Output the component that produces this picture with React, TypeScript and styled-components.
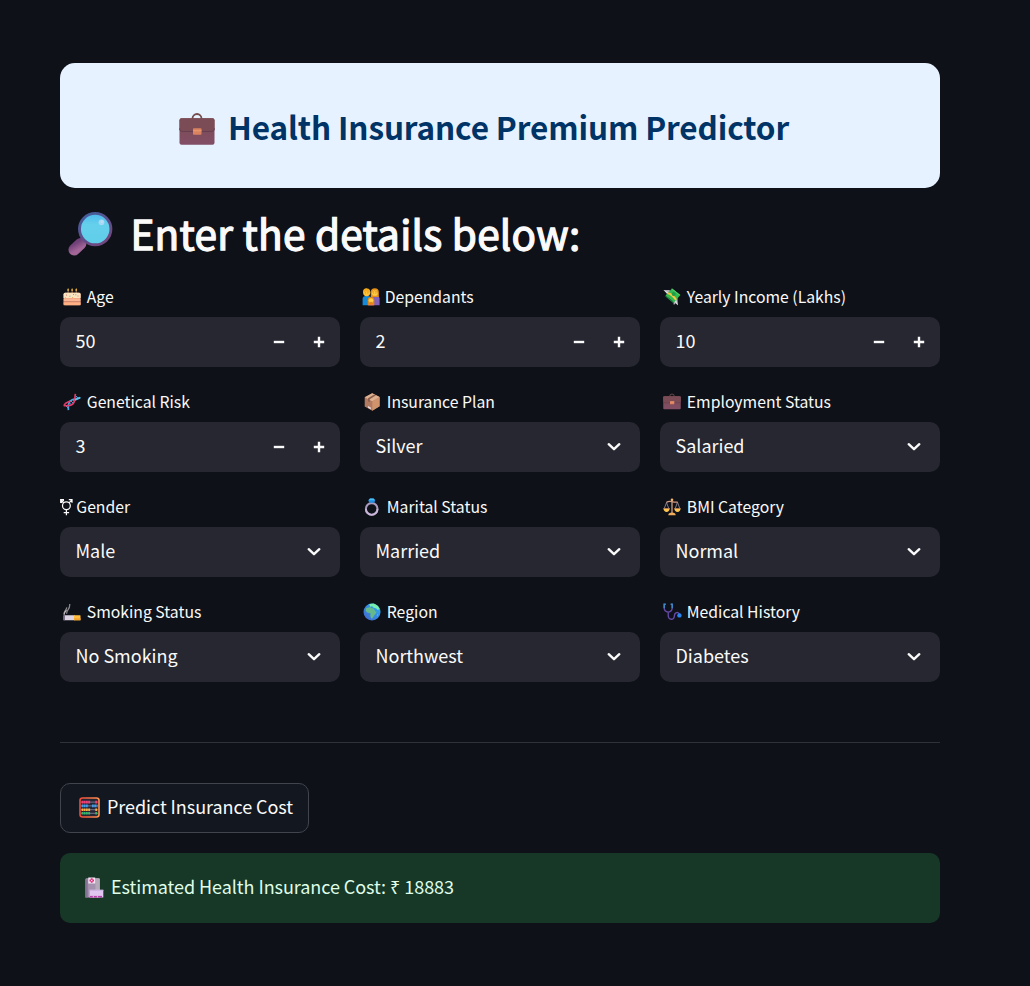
import React from 'react';
import styled, { createGlobalStyle } from 'styled-components';

const GlobalStyle = createGlobalStyle`
  * { box-sizing: border-box; }
  body {
    margin: 0;
    background: #0e1117;
    color: #fafafa;
    font-family: "Noto Sans CJK JP", "Noto Sans", sans-serif;
  }
`;

const Page = styled.main`
  min-height: 986px;
  padding: 63px 90px 63px 60px;
`;

const Banner = styled.header`
  display: flex;
  align-items: flex-start;
  height: 125px;
  padding: 49px 0 0 118.5px;
  border-radius: 15px;
  background: #e6f2ff;
`;

const BannerTitle = styled.h1`
  margin: -7px 0 0 13.5px;
  color: #003366;
  font-size: 31.5px;
  font-weight: 700;
  letter-spacing: -0.11px;
  line-height: 42px;
  white-space: nowrap;
`;

const SectionHeading = styled.h2`
  display: flex;
  align-items: center;
  height: 54px;
  margin: 19px 0 24px;
  padding-left: 7px;
  gap: 17.5px;
  font-size: 40.5px;
  font-weight: 400;
  letter-spacing: 0.26px;
  -webkit-text-stroke: 1.3px currentColor;
  line-height: 54px;
  white-space: nowrap;
`;

const HeadingText = styled.span`
  padding-bottom: 2px;
`;

const FieldGrid = styled.section`
  display: grid;
  grid-template-columns: repeat(3, 280px);
  gap: 23px 20px;
`;

const Field = styled.div`
  display: flex;
  flex-direction: column;
  gap: 8px;
`;

const Label = styled.label<{ $inset: number; $gap: number }>`
  display: flex;
  align-items: center;
  height: 24px;
  padding-left: ${(p) => p.$inset}px;
  gap: ${(p) => p.$gap}px;
  font-size: 15.75px;
  line-height: 24px;
  white-space: nowrap;
`;

const Control = styled.div<{ $end: number }>`
  display: flex;
  align-items: center;
  justify-content: space-between;
  height: 50px;
  padding: 0 ${(p) => p.$end}px 0 15.5px;
  border-radius: 10px;
  background: #262730;
`;

const Value = styled.span<{ $tight?: boolean }>`
  padding-bottom: ${(p) => (p.$tight ? 3 : 4)}px;
  font-size: 18px;
  letter-spacing: ${(p) => (p.$tight ? '-0.055px' : '-0.02px')};
  line-height: 28px;
  white-space: nowrap;
`;

const Stepper = styled.div`
  display: flex;
  gap: 28px;
`;

const StepButton = styled.button`
  display: flex;
  padding: 0;
  border: 0;
  background: none;
  color: #fafafa;
`;

const Divider = styled.hr`
  height: 1px;
  margin: 60px 0 40px;
  border: 0;
  background: #303238;
`;

const PredictButton = styled.button`
  display: flex;
  align-items: center;
  width: 249px;
  height: 50px;
  margin: 0;
  padding: 0 0 2px 17.5px;
  gap: 7.5px;
  border: 1px solid #41444c;
  border-radius: 10px;
  background: #131720;
  color: #fafafa;
  font: inherit;
`;

const Result = styled.div`
  display: flex;
  align-items: center;
  height: 70px;
  margin-top: 20px;
  padding: 0 0 1px 25px;
  gap: 7px;
  border-radius: 10px;
  background: #183827;
  color: #dffde9;
`;

const Svg = styled.svg`
  display: block;
  flex: none;
`;

const Briefcase = ({ width = 18 }: { width?: number }) => (
  <Svg width={width} height={width} viewBox="0 0 36 36">
    <defs>
      <linearGradient id="case" x1="0" y1="0" x2="0" y2="1">
        <stop offset="0" stopColor="#7a4c50" />
        <stop offset="1" stopColor="#824e66" />
      </linearGradient>
    </defs>
    <path d="M13.5 7V6.5a4.5 4.5 0 0 1 9 0V7" fill="none" stroke="#744d4c" strokeWidth="1.8" />
    <rect x="0.5" y="6.3" width="35" height="26.4" rx="2" fill="url(#case)" />
    <path d="M.5 8.3a2 2 0 0 1 2-2h31a2 2 0 0 1 2 2V17a3 3 0 0 1-3 2.5h-29A3 3 0 0 1 .5 17z" fill="#7b4c55" />
    <path d="M.5 16.5a3 3 0 0 0 3 3h29a3 3 0 0 0 3-3" fill="none" stroke="#653e51" strokeWidth="1" />
    <rect x="14" y="16.2" width="8.5" height="6.5" rx=".8" fill="#d98260" />
    <path d="M14 18.8h8.5" stroke="#ef9a70" strokeWidth="1" />
  </Svg>
);

const Magnifier = () => (
  <Svg width="46" height="46" viewBox="0 0 46 46">
    <defs>
      <linearGradient id="rim" x1="0" y1="0" x2=".6" y2="1">
        <stop offset="0" stopColor="#3f5e9d" />
        <stop offset="1" stopColor="#71477f" />
      </linearGradient>
      <linearGradient id="grip" x1="0" y1="0" x2=".6" y2="1">
        <stop offset="0" stopColor="#704078" />
        <stop offset="1" stopColor="#a26597" />
      </linearGradient>
      <linearGradient id="glass" x1="0" y1="0" x2="0" y2="1">
        <stop offset="0" stopColor="#4db9ed" />
        <stop offset=".35" stopColor="#65d0ec" />
        <stop offset="1" stopColor="#60cee8" />
      </linearGradient>
    </defs>
    <path d="M13 28.5 18 33" stroke="#654477" strokeWidth="5" />
    <path d="M7.2 38.8 13.6 32.8" stroke="url(#grip)" strokeWidth="11.5" strokeLinecap="round" />
    <circle cx="28.2" cy="18.1" r="15.7" fill="url(#glass)" stroke="url(#rim)" strokeWidth="2.9" />
    <circle cx="34.5" cy="11.3" r="2.9" fill="#a4d9f3" />
    <circle cx="35" cy="10.6" r="1.6" fill="#b9dcf7" />
  </Svg>
);

const Cake = () => (
  <Svg width="18" height="18" viewBox="0 0 18 18">
    <path d="M5.1 2v4M9.1 2v4M13.2 2v4" stroke="#a87450" strokeWidth="1" />
    <path d="m5.1.1.9 1.8-.9 1.3-.9-1.3zM9.1.1l.9 1.8-.9 1.3-.9-1.3zM13.2.1l.9 1.8-.9 1.3-.9-1.3z" fill="#ffc738" />
    <rect x=".6" y="4.7" width="17" height="12.6" rx="1.5" fill="#f3a98a" />
    <path d="M.6 6.2a1.5 1.5 0 0 1 1.5-1.5h14a1.5 1.5 0 0 1 1.5 1.5v3.9H.6z" fill="#fae5bf" />
    <path d="M.6 11.4h17v1.2H.6z" fill="#ffc19b" />
    <path d="M.6 13.4h17v1H.6z" fill="#c1755c" />
    <path d="M.6 14.4h17v2.8H.6z" fill="#ffb184" />
    <path d="M3 7.1h1M10 6.5h1M14.5 8h1" stroke="#de7c80" />
    <path d="M6.4 8.2h1M12.3 6.8h1" stroke="#7aa8cb" />
    <path d="M2 9.8h1M9 9.5h1" stroke="#eab364" />
  </Svg>
);

const Family = () => (
  <Svg width="18" height="18" viewBox="0 0 18 18">
    <path d="M.6 17.3v-6.2q0-3 3.3-3h2q3.3 0 3.3 3v6.2z" fill="#1689d7" />
    <path d="M9 17.3v-6.2q0-3 3.3-3h2q3.3 0 3.3 3v6.2z" fill="#8061bb" />
    <path d="M8.8 9V4.3a4 4 0 0 1 8 0V9z" fill="#e79217" />
    <circle cx="4.7" cy="4.6" r="3.6" fill="#ffc238" />
    <circle cx="12.8" cy="4.9" r="2.9" fill="#ffcb45" />
    <path d="M1.1 4.2C1.1.5 3.4.2 5.3.4c2 .2 3 1.5 3 4C6.3 4.5 4.9 4 4.1 2.9 3.3 4 2.4 4.4 1.1 4.2z" fill="#f5ab1f" />
    <path d="M9.7 4.1c1.4-.1 2.5-.7 3-1.5.7 1 1.8 1.5 3.4 1.5" stroke="#e18d19" strokeWidth=".8" fill="none" />
    <circle cx="3.6" cy="4.9" r=".4" fill="#80562c" />
    <circle cx="5.9" cy="4.9" r=".4" fill="#80562c" />
    <circle cx="11.8" cy="5" r=".4" fill="#80562c" />
    <circle cx="13.9" cy="5" r=".4" fill="#80562c" />
    <path d="M5.7 17.3v-5a3.3 3.3 0 0 1 6.6 0v5z" fill="#e9860e" />
    <circle cx="9" cy="12.6" r="2.4" fill="#ffcc46" />
    <path d="M7.9 14.2q1.1.8 2.2 0" stroke="#ad642b" strokeWidth=".6" fill="none" />
    <path d="M6.2 17.3q.3-1.5 2.8-1.5t2.8 1.5z" fill="#ef7d4a" />
  </Svg>
);

const Money = () => (
  <Svg width="18" height="18" viewBox="0 0 18 18">
    <path d="M.5 2.1 6.5 2l2.4 3.5-4.7 3.2-.5-4z" fill="#aaa9b0" />
    <path d="m9.8 12 4.6-2.3.5 7.5-2.5-2-1.5 1.7z" fill="#b5b4bc" />
    <path d="m.5 2.1 5.7 2.3L4.3 6zM10.2 12l3.2.9 1.5 4.3z" fill="#dedce2" />
    <path d="m9 .4 8.3 6.5-6.1 7.4-8.7-6.7z" fill="#30ba50" />
    <path d="m9 .4 8.3 6.5-.4.6L8.5.9z" fill="#67d877" />
    <path d="m2.5 7.6 8.7 6.7-.8 1-8-6.7z" fill="#238a44" />
    <path d="M5.3 4.6q4 .2 8.5 6.5l-1.3 1.6Q8.5 7 4.2 5.9z" fill="#f7c645" />
    <circle cx="10.7" cy="6" r="2" fill="#1e9d48" />
  </Svg>
);

const Dna = () => (
  <Svg width="18" height="18" viewBox="0 0 18 18" fill="none">
    <path d="m2.6 12.6 2.8 2.8M8 8l2.2 2.2M6.4 9.8l1.9 1.9M9.8 6.7l1.9 1.9M12.6 2.6l2.8 2.8" stroke="#4b9bd8" strokeWidth="1" />
    <path d="M5.4 17.2C5 13.5 5 10 7.4 7.8S13 6.4 17.2 4.4" stroke="#46a8e2" strokeWidth="1.7" />
    <path d="M.8 12.6C4.5 13 8 13 10.2 10.6S11.6 5 12.4.8" stroke="#df3c69" strokeWidth="1.7" />
    <path d="M.8 12.6C2.8 9 5 9.6 7.4 7.8" stroke="#df3c69" strokeWidth="1.6" />
    <path d="M12 7.3c1.5-1.6 4.2-1.4 5.2-3" stroke="#58c2ec" strokeWidth="1.6" />
  </Svg>
);

const Package = () => (
  <Svg width="18" height="18" viewBox="0 0 18 18">
    <path d="m9.2.3 7.4 3.8v9.2L9.3 17.8 1.7 13.4V4.2z" fill="#b27a61" />
    <path d="M9.3 8.3 16.6 4v9.3l-7.3 4.5z" fill="#d0936b" />
    <path d="m9.2.3 7.4 3.8-7.3 4.2-7.6-4.1z" fill="#deb190" />
    <path d="M11.3 1.4 13 2.3 6.7 6.2v3L5 8.3v-3z" fill="#8b5f4c" />
    <path d="m5 13 2.8 1.6v1.8L5 14.8z" fill="#e7d7de" />
  </Svg>
);

const GenderSign = () => (
  <Svg width="13" height="18" viewBox="0 0 13 18" fill="none" stroke="#fafafa" strokeWidth="1.25">
    <circle cx="6.4" cy="7.8" r="3.9" />
    <path d="M6.4 11.7v5.6M3.7 14.6h5.4M3.8 4.9.9 1.9M9 4.9l3-3M.7 4.9V1.6H4M8.8 1.6H12v3.2M1.2 4.8l2.6-2.6" />
  </Svg>
);

const Ring = () => (
  <Svg width="18" height="18" viewBox="0 0 18 18">
    <circle cx="8.7" cy="10.9" r="5.8" fill="none" stroke="#a99bbf" strokeWidth="2.1" />
    <path d="M2.9 11.1a5.8 5.8 0 0 0 11.6 0" fill="none" stroke="#cab6d8" strokeWidth="1.8" />
    <path d="M7 .4h3.6l1.5 1.8-.7 2.6H6.1l-.7-2.6z" fill="#218ce0" />
    <path d="M7 .4h3.6l1.5 1.8H5.4z" fill="#48bff7" />
  </Svg>
);

const Scales = () => (
  <Svg width="18" height="18" viewBox="0 0 18 18" fill="none">
    <path d="M9 1v14M3.3 4.5Q5.7 2.7 9 3.6t5.7.5" stroke="#d59b80" strokeWidth="1.3" />
    <path d="M3.5 4.6 1 11.1M3.5 4.6 6 11.1M14.5 4.2 12 11.1M14.5 4.2 17 11.1" stroke="#a99bab" strokeWidth=".75" />
    <path d="M.4 10.5h6.3q-.4 3.4-3.1 3.4T.4 10.5zM11.3 10.5h6.3q-.4 3.4-3.1 3.4t-3.2-3.4z" fill="#ffc44c" />
    <path d="M.5 10.5h6.2M11.3 10.5h6.2" stroke="#c27f52" strokeWidth=".8" />
    <circle cx="9" cy="1.8" r="1.3" fill="#f5b76b" />
    <path d="M5.3 17.2q.1-2.8 3.7-2.8t3.7 2.8z" fill="#efad5c" />
  </Svg>
);

const Cigarette = () => (
  <Svg width="18" height="18" viewBox="0 0 18 18" fill="none">
    <path d="M1.3 11.8C.2 7.1 4 7.8 3.6 4.4M3.6 10.8C3.5 6 7.1 7 6.7 1" stroke="#8a888d" strokeWidth="1.3" />
    <path d="M1.3 11.4C.8 9 2.5 8.8 3.5 7.2" stroke="#bab8bc" strokeWidth="1.2" />
    <rect x=".5" y="12.3" width="11.3" height="5" rx=".5" fill="#dcd4e5" />
    <path d="M.5 12.3h1.3v5H.5z" fill="#665a71" />
    <path d="M11 12.3h6q.5 0 .5.5v4q0 .5-.5.5h-6z" fill="#ffbe3f" />
    <path d="M11.1 15.2h6.4v2.1h-6.4z" fill="#f4a431" />
  </Svg>
);

const Globe = () => (
  <Svg width="18" height="18" viewBox="0 0 18 18">
    <defs>
      <linearGradient id="ocean" x1="0" y1="1" x2="1" y2="0">
        <stop offset="0" stopColor="#4665cb" />
        <stop offset=".65" stopColor="#3396ea" />
        <stop offset="1" stopColor="#25c9f6" />
      </linearGradient>
    </defs>
    <circle cx="9" cy="8.9" r="8.5" fill="url(#ocean)" />
    <path d="M3 5.2 7.3 3.9l.8 1.2 2.3.2 2 3.1 1.3.2-.8 2-1.8 1.8-1 2.4-1.6 1-1.2-2.5.2-3.1-2.7-.4-2-1.5z" fill="#65b98a" />
    <path d="M6.3 1.1 10.8.6l4.1 2.3 1.7 2.9-1.7 1.1-1.9-1.7-2.3-.5-1.5-1.5-2 .5z" fill="#79efad" />
    <path d="m13.8 12 1.1-1-.7 2.4z" fill="#71d6a2" />
  </Svg>
);

const Stethoscope = () => (
  <Svg width="19" height="18" viewBox="0 0 19 18" fill="none">
    <path d="M2.7 1.3H1.2v3.4q0 3.7 4 4.4 4-.7 4-4.4V1.3H7.7M5.2 9.1v3.2c0 5 6.2 5.4 6.2.5 0-3.4 4.1-4.7 5-1.4" stroke="#6649a9" strokeWidth="1.35" />
    <path d="M2.7 1.3H1.2v4M7.7 1.3h1.5v4" stroke="#398dcc" strokeWidth="1.4" />
    <circle cx="16.4" cy="12.4" r="2.2" fill="#2784ee" />
  </Svg>
);

const Abacus = () => (
  <Svg width="21" height="21" viewBox="0 0 21 21">
    <defs>
      <linearGradient id="frame">
        <stop offset="0" stopColor="#ef4938" />
        <stop offset="1" stopColor="#fb9251" />
      </linearGradient>
    </defs>
    <rect x="1" y="1" width="19" height="19" rx="2.5" fill="#252634" stroke="url(#frame)" strokeWidth="1.6" />
    <path d="M2 5.1h17M2 8.9h17M2 12.7h17M2 16.3h17" stroke="#8c89a1" strokeWidth=".8" />
    <path d="M2.6 5.1h8.9M16.3 5.1h2" stroke="#ee3f79" strokeWidth="2.6" strokeDasharray="1.8 .4" />
    <path d="M2.6 8.9h6.7M13 8.9h5.4" stroke="#429be4" strokeWidth="2.6" strokeDasharray="1.8 .4" />
    <path d="M2.6 12.7h8.9M16.3 12.7h2" stroke="#f7ae4a" strokeWidth="2.6" strokeDasharray="1.8 .4" />
    <path d="M2.6 16.3h8.9M16.3 16.3h2" stroke="#35b36d" strokeWidth="2.6" strokeDasharray="1.8 .4" />
  </Svg>
);

const Hospital = () => (
  <Svg width="19" height="21" viewBox="0 0 19 21">
    <path d="M.4 2.4q0-1.2 1.2-1.2h12q1.2 0 1.2 1.2v18.1H.4z" fill="#a391ad" />
    <path d="M.4 2.4h2.3v18.1H.4z" fill="#857096" />
    <path d="M10.4 1.2h3.2q1.2 0 1.2 1.2V13h-4.4z" fill="#b5aab9" />
    <path d="M3.3.5h6.9v6H3.3z" fill="#f3e7f4" />
    <path d="M6.7 1.2v4.5M4.5 3.5H9" stroke="#e02a78" strokeWidth="1.8" />
    <circle cx="6.7" cy="3.5" r=".7" fill="#fff" />
    <path d="M4.6 12.8h13.7v7.7H4.6z" fill="#dfc5f0" />
    <path d="M4.6 12.8h13.7v1.2H4.6z" fill="#cdb4e4" />
    <path d="M5 18.9h12v1.6H5z" fill="#b640aa" />
    <path d="M8.3 18.9v1.6M12.4 18.9v1.6" stroke="#efd2f5" strokeWidth=".8" />
  </Svg>
);

const Minus = () => (
  <Svg width="12" height="12" viewBox="0 0 12 12">
    <path d="M.8 6h10.4" stroke="currentColor" strokeWidth="2.4" />
  </Svg>
);

const Plus = () => (
  <Svg width="12" height="12" viewBox="0 0 12 12">
    <path d="M.8 6h10.4M6 .8v10.4" stroke="currentColor" strokeWidth="2.4" />
  </Svg>
);

const Chevron = () => (
  <Svg width="14" height="10" viewBox="0 0 14 10">
    <path d="m1.7 2.2 5.3 5 5.3-5" fill="none" stroke="#fafafa" strokeWidth="2.4" strokeLinecap="round" strokeLinejoin="round" />
  </Svg>
);

interface FieldSpec {
  icon: React.ReactNode;
  label: string;
  value: string;
  numeric?: boolean;
  inset?: number;
  gap?: number;
}

const fields: FieldSpec[] = [
  { icon: <Cake />, label: 'Age', value: '50', numeric: true },
  { icon: <Family />, label: 'Dependants', value: '2', numeric: true, inset: 1.5, gap: 5.2 },
  { icon: <Money />, label: 'Yearly Income (Lakhs)', value: '10', numeric: true },
  { icon: <Dna />, label: 'Genetical Risk', value: '3', numeric: true },
  { icon: <Package />, label: 'Insurance Plan', value: 'Silver' },
  { icon: <Briefcase />, label: 'Employment Status', value: 'Salaried' },
  { icon: <GenderSign />, label: 'Gender', value: 'Male', inset: 0, gap: 3.3 },
  { icon: <Ring />, label: 'Marital Status', value: 'Married' },
  { icon: <Scales />, label: 'BMI Category', value: 'Normal' },
  { icon: <Cigarette />, label: 'Smoking Status', value: 'No Smoking' },
  { icon: <Globe />, label: 'Region', value: 'Northwest' },
  { icon: <Stethoscope />, label: 'Medical History', value: 'Diabetes', gap: 5.2 },
];

export default function App() {
  return (
    <>
      <GlobalStyle />
      <Page>
        <Banner>
          <Briefcase width={36} />
          <BannerTitle>Health Insurance Premium Predictor</BannerTitle>
        </Banner>
        <SectionHeading>
          <Magnifier />
          <HeadingText>Enter the details below:</HeadingText>
        </SectionHeading>
        <FieldGrid>
          {fields.map((f) => (
            <Field key={f.label}>
              <Label $inset={f.inset ?? 2.6} $gap={f.gap ?? 6.2}>
                {f.icon}
                <span>{f.label}</span>
              </Label>
              <Control $end={f.numeric ? 15 : 19}>
                <Value>{f.value}</Value>
                {f.numeric ? (
                  <Stepper>
                    <StepButton aria-label="Decrease"><Minus /></StepButton>
                    <StepButton aria-label="Increase"><Plus /></StepButton>
                  </Stepper>
                ) : (
                  <Chevron />
                )}
              </Control>
            </Field>
          ))}
        </FieldGrid>
        <Divider />
        <PredictButton>
          <Abacus />
          <Value $tight>Predict Insurance Cost</Value>
        </PredictButton>
        <Result>
          <Hospital />
          <Value $tight>Estimated Health Insurance Cost: ₹ 18883</Value>
        </Result>
      </Page>
    </>
  );
}
